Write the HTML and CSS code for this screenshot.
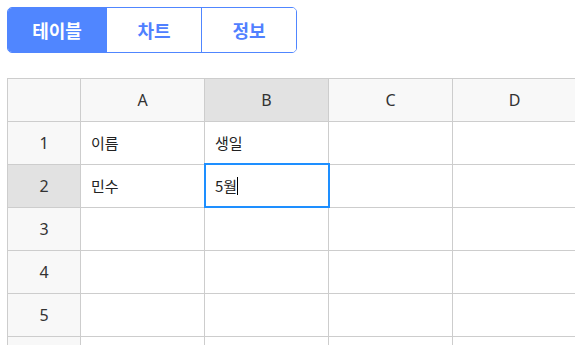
FILE: index.html
```html
<!DOCTYPE html>
<html lang="ko">
<head>
    <meta charset="UTF-8">
    <title>시트</title>
    <link rel="stylesheet" href="styles.css">
</head>
<body>

<div class="tabs">
    <button class="tab active">테이블</button>
    <button class="tab">차트</button>
    <button class="tab">정보</button>
</div>

<div class="sheet">
    <table class="grid">
        <colgroup>
            <col class="col-head">
            <col class="col-cell">
            <col class="col-cell">
            <col class="col-cell">
            <col class="col-cell">
        </colgroup>
        <tr class="head-row">
            <th class="corner"></th>
            <th>A</th>
            <th class="current">B</th>
            <th>C</th>
            <th>D</th>
        </tr>
        <tr>
            <th>1</th>
            <td>이름</td>
            <td>생일</td>
            <td></td>
            <td></td>
        </tr>
        <tr>
            <th class="current">2</th>
            <td>민수</td>
            <td class="editing">5월<span class="caret"></span></td>
            <td></td>
            <td></td>
        </tr>
        <tr>
            <th>3</th>
            <td></td><td></td><td></td><td></td>
        </tr>
        <tr>
            <th>4</th>
            <td></td><td></td><td></td><td></td>
        </tr>
        <tr>
            <th>5</th>
            <td></td><td></td><td></td><td></td>
        </tr>
        <tr>
            <th></th>
            <td></td><td></td><td></td><td></td>
        </tr>
    </table>
</div>

</body>
</html>
```

FILE: styles.css
```css
body {
    margin: 0;
    padding: 7px 0 0 7px;
    font-family: "Noto Sans", "Noto Sans CJK KR", sans-serif;
    background: #fff;
    overflow: hidden;
}

.tabs {
    display: flex;
    width: 288px;
    height: 44px;
    border: 1px solid #5086ff;
    border-radius: 5px;
    overflow: hidden;
}

.tab {
    flex: 1;
    border: none;
    border-left: 1px solid #5086ff;
    background: #fff;
    color: #5080ff;
    font-family: "Noto Sans CJK KR", sans-serif;
    font-size: 18px;
    font-weight: bold;
    padding: 0;
    cursor: pointer;
}

.tab:first-child {
    border-left: none;
    flex: 0 0 98px;
}

.tab.active {
    background: #5086ff;
    color: #fff;
}

.sheet {
    margin-top: 25px;
}

.grid {
    border-collapse: collapse;
    table-layout: fixed;
    width: 570px;
}

.col-head {
    width: 73px;
}

.col-cell {
    width: 124px;
}

.grid th,
.grid td {
    border: 1px solid #cdcdcd;
    height: 42px;
    padding: 0;
    font-size: 16px;
    color: #333;
}

.grid th {
    background: #f8f8f8;
    font-weight: normal;
    text-align: center;
}

.grid .head-row th {
    height: 41.5px;
}

.grid th.current {
    background: #e2e2e2;
}

.grid td {
    padding-left: 10px;
    font-family: "Noto Sans CJK KR", sans-serif;
    font-size: 15px;
    color: #222;
}

.grid td.editing {
    outline: 2px solid #1e8fff;
    outline-offset: -1px;
}

.caret {
    display: inline-block;
    width: 1px;
    height: 18px;
    background: #000;
    vertical-align: -3px;
}
```
